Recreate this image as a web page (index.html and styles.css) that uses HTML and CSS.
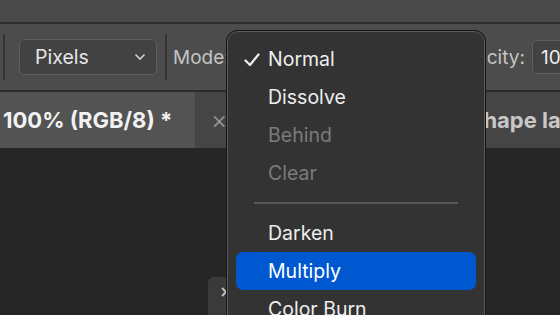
FILE: index.html
```html
<!DOCTYPE html>
<html lang="en">
<head>
    <meta charset="UTF-8">
    <meta name="viewport" content="width=device-width, initial-scale=1.0">
    <title>Blend mode menu</title>
    <link rel="stylesheet" href="styles.css">
</head>
<body>
    <div class="app">
        <div class="titlebar"></div>

        <div class="options">
            <span class="sep"></span>
            <div class="select pixels">
                <span>Pixels</span>
                <svg width="12" height="8" viewBox="0 0 12 8"><path d="M1.5 1.5 L6 6 L10.5 1.5" fill="none" stroke="#d0d0d0" stroke-width="1.6"/></svg>
            </div>
            <span class="sep"></span>
            <span class="label">Mode:</span>
            <div class="select mode"><span>Normal</span></div>
            <span class="label">Opacity:</span>
            <div class="field">100%</div>
        </div>

        <div class="tabs">
            <div class="tab active">100% (RGB/8) *</div>
            <div class="tab other">
                <span class="close">×</span>
                <span>Untitled-2 @ 66.7%</span>
            </div>
            <div class="tab">Shape layer</div>
        </div>

        <div class="canvas">
            <div class="panel-toggle">
                <svg width="8" height="12" viewBox="0 0 8 12"><path d="M2 2 L6 6 L2 10" fill="none" stroke="#bdbdbd" stroke-width="2"/></svg>
            </div>
        </div>

        <!-- blend mode dropdown, open over the toolbar -->
        <ul class="menu">
            <li class="item">
                <svg class="check" width="16" height="14" viewBox="0 0 16 14"><path d="M1.5 7.5 L6 12 L14.5 1.5" fill="none" stroke="#f0f0f0" stroke-width="2.2" stroke-linecap="round" stroke-linejoin="round"/></svg>
                Normal
            </li>
            <li class="item">Dissolve</li>
            <li class="item disabled">Behind</li>
            <li class="item disabled">Clear</li>
            <li class="divider"></li>
            <li class="item">Darken</li>
            <li class="item selected">Multiply</li>
            <li class="item">Color Burn</li>
        </ul>
    </div>
</body>
</html>
```

FILE: styles.css
```css
html, body {
    margin: 0;
    padding: 0;
    height: 100%;
    overflow: hidden;
}
body {
    font-family: Inter, "Noto Sans", sans-serif;
    background-color: #262626;
}
.app {
    position: relative;
    height: 100%;
    display: flex;
    flex-direction: column;
    overflow: hidden;
}
.titlebar {
    flex-shrink: 0;
    height: 22px;
    background-color: #494949;
    border-bottom: 2px solid #2c2c2c;
}
.options {
    flex-shrink: 0;
    height: 66px;
    background-color: #4c4c4c;
    border-bottom: 2px solid #2c2c2c;
    display: flex;
    align-items: center;
    white-space: nowrap;
}
.options > * {
    flex-shrink: 0;
}
.sep {
    width: 2px;
    height: 46px;
    background-color: #343434;
}
.options > .sep:first-child {
    margin-left: 3px;
}
.select {
    box-sizing: border-box;
    height: 36px;
    border: 1.5px solid #5d5d5d;
    border-radius: 5px;
    background-color: #424242;
    display: flex;
    align-items: center;
    justify-content: space-between;
    color: #e6e6e6;
    font-size: 19.5px;
}
.pixels {
    width: 138px;
    margin: 0 8px 0 14px;
    padding: 0 10px 0 15px;
}
.label {
    color: #c4c4c4;
    font-size: 19px;
    margin-left: 6px;
}
.mode {
    width: 186px;
    margin: 0 20px 0 8px;
    padding: 0 12px;
}
.field {
    box-sizing: border-box;
    height: 34px;
    margin-left: 7px;
    padding: 0 8px;
    border: 1.5px solid #5d5d5d;
    border-radius: 5px;
    background-color: #424242;
    color: #eeeeee;
    font-size: 19px;
    display: flex;
    align-items: center;
}
.tabs {
    flex-shrink: 0;
    height: 56px;
    background-color: #454545;
    display: flex;
    white-space: nowrap;
    overflow: hidden;
}
.tab {
    flex-shrink: 0;
    display: flex;
    align-items: center;
    font-size: 22px;
    font-weight: 700;
    color: #c8c8c8;
    padding-left: 5px;
}
.tab.active {
    width: 195px;
    box-sizing: border-box;
    padding-left: 3px;
    background-color: #535353;
    color: #f2f2f2;
}
.tab.other {
    width: 269px;
    box-sizing: border-box;
    padding-left: 16px;
    gap: 12px;
    font-weight: 400;
}
.close {
    color: #9a9a9a;
    font-size: 25px;
    font-weight: 300;
}
.canvas {
    flex: 1;
    background-color: #262626;
    display: flex;
    align-items: flex-end;
    padding-left: 208px;
}
.panel-toggle {
    width: 22px;
    height: 38px;
    background-color: #3a3a3a;
    border-radius: 6px 0 0 0;
    display: flex;
    justify-content: flex-end;
    padding-top: 9px;
    padding-right: 2px;
    box-sizing: border-box;
}
.panel-toggle svg {
    display: block;
}
.menu {
    position: absolute;
    left: 227px;
    top: 31px;
    width: 258px;
    height: 300px;
    box-sizing: border-box;
    margin: 0;
    padding: 8px 8px;
    list-style: none;
    background-color: #333333;
    border: 1px solid #5c5c5c;
    border-radius: 11px;
    box-shadow: 0 0 0 1px #151515;
}
.item {
    height: 38px;
    display: flex;
    align-items: center;
    padding-left: 32px;
    font-size: 19.5px;
    color: #eeeeee;
    border-radius: 7px;
    position: relative;
}
.check {
    position: absolute;
    left: 8px;
    top: 13px;
}
.item.disabled {
    color: #7b7b7b;
}
.item.selected {
    background-color: #0058d0;
    color: #ffffff;
}
.divider {
    height: 2px;
    margin: 10px 18px 10px 18px;
    background-color: #575757;
}
```
